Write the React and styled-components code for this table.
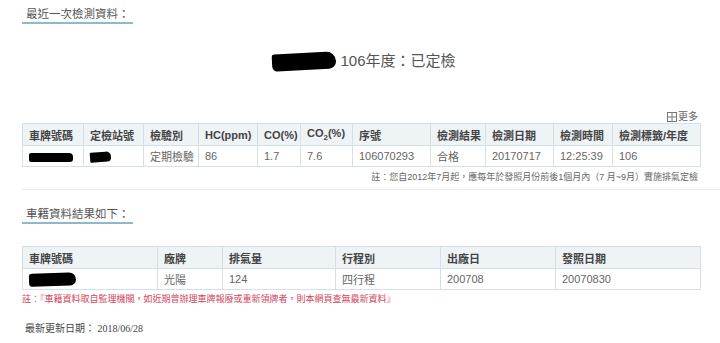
import React from 'react';
import styled, { createGlobalStyle } from 'styled-components';

const GlobalStyle = createGlobalStyle`
  html, body {
    margin: 0;
    padding: 0;
    background: #ffffff;
  }
  body {
    font-family: 'Liberation Sans', 'Noto Sans CJK TC', sans-serif;
    color: #555;
  }
`;

const Page = styled.div`
  width: 678px;
  margin-left: 22px;
  display: flex;
  flex-direction: column;
`;

const SectionTitle = styled.div`
  align-self: flex-start;
  margin-top: ${(p) => p.$top}px;
  padding: 0 3px 1px 4px;
  font-size: 11.5px;
  line-height: 14px;
  color: #555;
  border-bottom: 2px solid #8fb8cc;
`;

const Headline = styled.div`
  display: flex;
  justify-content: center;
  align-items: center;
  margin-top: 27px;
  font-size: 15px;
  line-height: 20px;
  color: #555;
  padding-left: 6px;
`;

const Redacted = styled.span`
  display: inline-block;
  vertical-align: middle;
  width: ${(p) => p.$w}px;
  height: ${(p) => p.$h}px;
  background: #000;
  border-radius: ${(p) => p.$r || '4px 10px 8px 3px'};
  transform: rotate(${(p) => p.$rot || 0}deg);
  margin-right: ${(p) => p.$mr || 0}px;
`;

const MoreLink = styled.div`
  align-self: flex-end;
  margin-top: 40px;
  margin-right: 2px;
  font-size: 10px;
  line-height: 12px;
  color: #666;
  display: flex;
  align-items: center;
  gap: 1px;
`;

const Table = styled.table`
  border-collapse: collapse;
  table-layout: fixed;
  width: 678px;
  margin-top: ${(p) => p.$top}px;
  font-size: 11px;
`;

const Th = styled.th`
  background: #eef3f6;
  border: 1px solid #d5dfe6;
  height: 21px;
  padding: 0 0 0 6px;
  text-align: left;
  font-weight: bold;
  color: #444;
  white-space: nowrap;
  overflow: hidden;
`;

const Td = styled.td`
  border: 1px solid #d5dfe6;
  height: 20px;
  padding: 0 0 0 6px;
  text-align: left;
  color: #666;
  white-space: nowrap;
  overflow: hidden;
`;

const Note = styled.div`
  align-self: ${(p) => (p.$right ? 'flex-end' : 'flex-start')};
  margin-top: ${(p) => p.$top}px;
  margin-right: ${(p) => (p.$right ? 2 : 0)}px;
  font-size: 9px;
  line-height: 11px;
  color: ${(p) => (p.$red ? '#d2455e' : '#666')};
`;

const Rule = styled.div`
  height: 1px;
  background: #eeeeee;
  margin-top: ${(p) => p.$top}px;
  margin-right: -20px;
`;

const Updated = styled.div`
  margin-top: 17px;
  padding-left: 3px;
  font-family: 'Liberation Serif', 'Noto Sans CJK TC', serif;
  font-size: 10px;
  line-height: 13px;
  color: #444;
`;

const GridIcon = () => (
  <svg width="10" height="10" viewBox="0 0 10 10">
    <rect x="0.5" y="0.5" width="9" height="9" fill="none" stroke="#777" />
    <line x1="5" y1="0.5" x2="5" y2="9.5" stroke="#777" />
    <line x1="0.5" y1="5" x2="9.5" y2="5" stroke="#777" />
  </svg>
);

const inspectCols = [61, 60, 55, 59, 43, 52, 78, 55, 68, 59, 88];
const carCols = [135, 65, 113, 105, 115, 145];

export default function App() {
  return (
    <>
      <GlobalStyle />
      <Page>
        <SectionTitle $top={7}>最近一次檢測資料：</SectionTitle>

        <Headline>
          <Redacted $w={64} $h={17} $r="3px 12px 9px 6px" $rot={-3} $mr={4} />
          106年度：已定檢
        </Headline>

        <MoreLink>
          <GridIcon />
          更多
        </MoreLink>

        <Table $top={0}>
          <colgroup>
            {inspectCols.map((w, i) => (
              <col key={i} style={{ width: w }} />
            ))}
          </colgroup>
          <thead>
            <tr>
              <Th>車牌號碼</Th>
              <Th>定檢站號</Th>
              <Th>檢驗別</Th>
              <Th>HC(ppm)</Th>
              <Th>CO(%)</Th>
              <Th>
                CO<sub style={{ fontSize: 8 }}>2</sub>(%)
              </Th>
              <Th>序號</Th>
              <Th>檢測結果</Th>
              <Th>檢測日期</Th>
              <Th>檢測時間</Th>
              <Th>檢測標籤/年度</Th>
            </tr>
          </thead>
          <tbody>
            <tr>
              <Td>
                <Redacted $w={44} $h={9} $r="2px 4px 3px 2px" />
              </Td>
              <Td>
                <Redacted $w={21} $h={10} $r="1px 5px 4px 1px" $rot={-4} />
              </Td>
              <Td>定期檢驗</Td>
              <Td>86</Td>
              <Td>1.7</Td>
              <Td>7.6</Td>
              <Td>106070293</Td>
              <Td>合格</Td>
              <Td>20170717</Td>
              <Td>12:25:39</Td>
              <Td>106</Td>
            </tr>
          </tbody>
        </Table>

        <Note $right $top={5}>
          註：您自2012年7月起，應每年於發照月份前後1個月內（7 月~9月）實施排氣定檢
        </Note>
        <Rule $top={6} />

        <SectionTitle $top={17}>車籍資料結果如下：</SectionTitle>

        <Table $top={22}>
          <colgroup>
            {carCols.map((w, i) => (
              <col key={i} style={{ width: w }} />
            ))}
          </colgroup>
          <thead>
            <tr>
              <Th>車牌號碼</Th>
              <Th>廠牌</Th>
              <Th>排氣量</Th>
              <Th>行程別</Th>
              <Th>出廠日</Th>
              <Th>發照日期</Th>
            </tr>
          </thead>
          <tbody>
            <tr>
              <Td>
                <Redacted $w={47} $h={13} $r="3px 7px 6px 3px" $rot={-2} />
              </Td>
              <Td>光陽</Td>
              <Td>124</Td>
              <Td>四行程</Td>
              <Td>200708</Td>
              <Td>20070830</Td>
            </tr>
          </tbody>
        </Table>

        <Note $red $top={4}>
          註：『車籍資料取自監理機關，如近期曾辦理車牌報廢或重新領牌者，則本網頁查無最新資料』
        </Note>

        <Updated>最新更新日期： 2018/06/28</Updated>
        <Rule $top={8} />
      </Page>
    </>
  );
}
